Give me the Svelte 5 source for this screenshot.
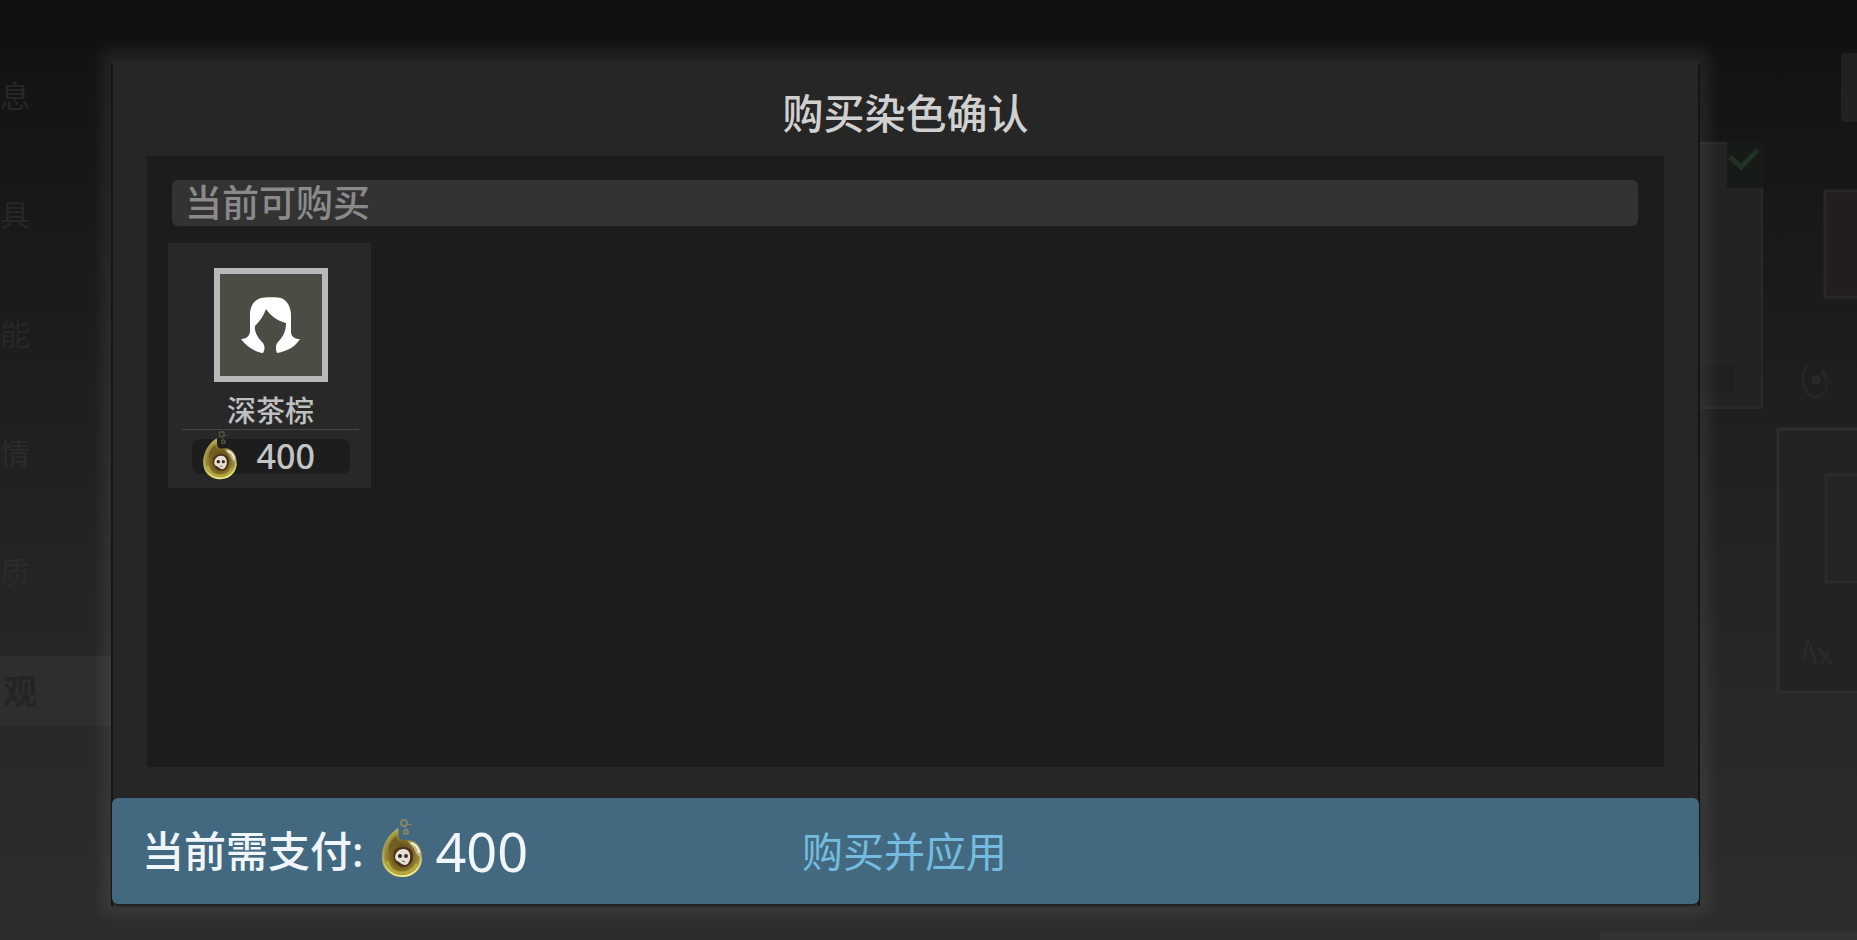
<script>
  const nav = ['息', '具', '能', '情', '质', '观'];
  const items = [{ name: '深茶棕', price: 400 }];
  const total = items.reduce((sum, item) => sum + item.price, 0);
</script>

{#snippet coin(id, bubble)}
  <svg class="coin" viewBox="0 0 42 60" aria-hidden="true">
    <defs>
      <radialGradient id="{id}-body" cx="0.5" cy="0.55" r="0.58">
        <stop offset="0" stop-color="#4a3512" />
        <stop offset="0.45" stop-color="#75611f" />
        <stop offset="0.78" stop-color="#a4963f" />
        <stop offset="1" stop-color="#c9c27c" />
      </radialGradient>
      <linearGradient id="{id}-rim" x1="0.2" y1="0" x2="0.4" y2="1">
        <stop offset="0" stop-color="#9a8d56" />
        <stop offset="0.5" stop-color="#b8ac62" />
        <stop offset="1" stop-color="#f0eb86" />
      </linearGradient>
    </defs>
    <path d="M17 10C8 16 1 26 1 38C0 50 9 59 21 59C33 59 41 51 41 39C41 30 36 23 29 22C25 22 20 23 18 20C17 17 18 13 17 10Z" fill="url(#{id}-body)" />
    <path d="M8 23C4 28 2 33 2 38C2 49 10 58 21 58C32 58 40 50 40 40" fill="none" stroke="url(#{id}-rim)" stroke-width="2" />
    <path d="M6 43C8 51 14 55 21 55C28 55 33 51 36 46" fill="none" stroke="#c4b642" stroke-width="3" opacity="0.7" />
    <path d="M15 18C10 22 7 28 8 34C12 27 17 26 22 25C18 24 16 22 15 18Z" fill="#6e5d24" />
    <path d="M27 23C36 24 41 31 40 41C38 38 36 37 34 33C33 29 29 27 27 23Z" fill="#bdb48e" />
    <path d="M30 25C35 26 38 31 38 35" fill="none" stroke="#f4efdc" stroke-width="2" />
    <path d="M13 34C16 28 27 27 31 33C34 42 29 49 23 49C16 49 11 42 13 34Z" fill="#4a301c" />
    <path d="M16 34C19 30 26 30 28 34C31 39 28 47 24 47C21 47 19 44 16 43C13 41 14 36 16 34Z" fill="#e6dfd4" />
    <circle cx="19" cy="38" r="2" fill="#2e231b" />
    <circle cx="25" cy="38" r="2" fill="#3a2e26" />
    <path d="M21 43L24 44" stroke="#6d6153" stroke-width="1" />
    <circle cx="23" cy="5" r="3" fill="none" stroke={bubble} stroke-width="2" />
    <circle cx="25" cy="14" r="2" fill="none" stroke={bubble} stroke-width="2" />
    <path d="M26 7L31 6M24 9L25 12" stroke={bubble} stroke-width="1" />
  </svg>
{/snippet}

<div class="screen">
  <div class="backdrop" aria-hidden="true">
    <div class="nav">
      {#each nav as label, i}
        <span class:active={i === 5}>{label}</span>
      {/each}
    </div>
    <svg class="scene" viewBox="0 0 257 940">
      <rect x="241" y="53" width="40" height="69" rx="4" fill="#212121" />
      <path d="M0 143H162V408H0Z" fill="#232323" stroke="#292929" stroke-width="2" />
      <rect x="127" y="142" width="37" height="46" fill="#171b18" />
      <path d="M130 157L141 167L158 150" fill="none" stroke="#203225" stroke-width="5" />
      <rect x="60" y="364" width="74" height="28" rx="4" fill="#202020" />
      <rect x="225" y="191" width="60" height="106" fill="#231d1e" stroke="#292727" stroke-width="3" />
      <path d="M208 366C199 376 202 394 215 397C228 397 231 380 220 373M222 370L232 384" fill="none" stroke="#252521" stroke-width="3" />
      <circle cx="216" cy="380" r="5" fill="#282826" />
      <path d="M270 429H178V692H270" fill="#232323" stroke="#2e2e2e" stroke-width="3" />
      <path d="M270 475H226V582H270" fill="#242424" stroke="#2b2b2b" stroke-width="3" />
      <path d="M208 640L203 662M210 645L216 664M218 648L232 664M222 664L228 652" fill="none" stroke="#2a2a26" stroke-width="3" />
      <rect x="0" y="932" width="257" height="8" fill="#323232" />
    </svg>
  </div>

  <main class="dialog" role="dialog" aria-labelledby="title">
    <h1 id="title">购买染色确认</h1>
    <section class="panel">
      <h2>当前可购买</h2>
      <div class="items">
        {#each items as item}
          <article class="card">
            <div class="thumb">
              <svg viewBox="0 0 60 56" aria-hidden="true">
                <path d="M20 1C23 0 37 0 40 1C46 3 50 10 50 18V36C51 40 54 42 59 42C54 50 47 54 36 56C34 51 35 47 37 45C42 40 45 34 45 26C36 24 29 18 25 12C23 18 19 24 14 29C13 36 18 42 22 46C24 49 24 53 22 56C14 55 6 50 0 42C6 42 8 39 9 35V18C9 9 13 3 20 1Z" fill="#fff" />
              </svg>
            </div>
            <p class="name">{item.name}</p>
            <div class="price">
              {@render coin('item', '#4c5040')}
              <span>{item.price}</span>
            </div>
          </article>
        {/each}
      </div>
    </section>
    <footer>
      <div class="total">
        <span class="label">当前需支付:</span>
        {@render coin('total', '#858560')}
        <span class="amount">{total}</span>
      </div>
      <button type="button">购买并应用</button>
    </footer>
  </main>
</div>

<style>
  :global(body) {
    margin: 0;
    background: #2d2d2d;
  }
  .screen {
    box-sizing: border-box;
    position: relative;
    display: flex;
    min-height: 100vh;
    padding: 60px 158px 36px 112px;
    overflow: hidden;
    background: linear-gradient(#0f0f0f 0, #141414 9%, #1e1e1e 40%, #282828 75%, #2d2d2d 100%);
    font-family: 'Noto Sans', 'Noto Sans CJK SC', sans-serif;
  }
  .backdrop {
    position: absolute;
    inset: 0;
  }
  .nav {
    display: flex;
    flex-direction: column;
    gap: 49px;
    width: 112px;
    padding-top: 61px;
    color: #272727;
    font-size: 30px;
    line-height: 70px;
  }
  .nav span:nth-child(n + 4) {
    color: #2b2b2b;
  }
  .nav .active:last-child {
    padding-left: 3px;
    background: #2e2e2e;
    color: #242424;
    font-size: 34px;
    font-weight: 700;
  }
  .scene {
    position: absolute;
    top: 0;
    right: 0;
    width: 257px;
    height: 940px;
  }
  .dialog {
    position: relative;
    display: flex;
    flex: 1;
    flex-direction: column;
    background: #262626;
    box-shadow: 0 0 14px 10px rgba(255, 255, 255, 0.07);
  }
  .dialog::before {
    content: '';
    position: absolute;
    inset: 4px -1px -2px;
    border: solid #151515;
    border-width: 0 2px;
    pointer-events: none;
  }
  h1,
  h2,
  p {
    margin: 0;
    font-weight: 500;
  }
  h1 {
    padding-top: 5px;
    margin-bottom: -5px;
    color: #d0d0d0;
    font-size: 41px;
    line-height: 96px;
    text-align: center;
  }
  .panel {
    flex: 1;
    margin: 0 35px 31px;
    padding: 24px 26px 24px 21px;
    background: #1c1c1c;
  }
  h2 {
    margin-left: 4px;
    padding: 0 13px;
    border-radius: 6px;
    background: #333;
    color: #8a8a8a;
    font-size: 37px;
    line-height: 46px;
  }
  .items {
    display: flex;
    flex-wrap: wrap;
    gap: 20px;
    margin-top: 17px;
  }
  .card {
    box-sizing: border-box;
    display: flex;
    flex-direction: column;
    align-items: center;
    width: 203px;
    padding: 25px 12px 14px 14px;
    background: #282828;
  }
  .thumb {
    display: flex;
    align-items: center;
    justify-content: center;
    width: 102px;
    height: 102px;
    border: 6px solid #b9b9b9;
    background: #4b4c44;
  }
  .thumb svg {
    width: 60px;
    height: 56px;
  }
  .name {
    align-self: stretch;
    padding-top: 10px;
    border-bottom: 1px solid #444;
    color: #c0c0c0;
    font-size: 29px;
    line-height: 37px;
    text-align: center;
  }
  .price {
    box-sizing: border-box;
    display: flex;
    align-items: center;
    gap: 18px;
    width: 158px;
    height: 35px;
    margin-top: 9px;
    padding-left: 9px;
    border-radius: 8px;
    background: #1d1d1d;
    color: #c4c4c4;
    font-size: 34px;
    font-weight: 500;
    line-height: 35px;
  }
  .price .coin {
    width: 38px;
    height: 50px;
    margin-bottom: 4px;
  }
  footer {
    position: relative;
    display: grid;
    grid-template-columns: 1fr auto 1fr;
    align-items: center;
    height: 106px;
    padding: 0 32px 0 30px;
    border-radius: 6px;
    background: #42697f;
    box-shadow: 0 2px 3px #1c1c1c;
  }
  .total {
    display: flex;
    align-items: center;
    color: #f0f6fb;
    white-space: nowrap;
  }
  .label {
    font-size: 42px;
    font-weight: 500;
    line-height: 60px;
  }
  .total .coin {
    width: 42px;
    height: 60px;
    margin: 0 12px 6px 18px;
  }
  .amount {
    font-size: 54px;
    line-height: 60px;
  }
  button {
    padding: 0;
    border: 0;
    background: none;
    color: #74bbdf;
    font: inherit;
    font-size: 41px;
    line-height: 60px;
    cursor: pointer;
  }
</style>
